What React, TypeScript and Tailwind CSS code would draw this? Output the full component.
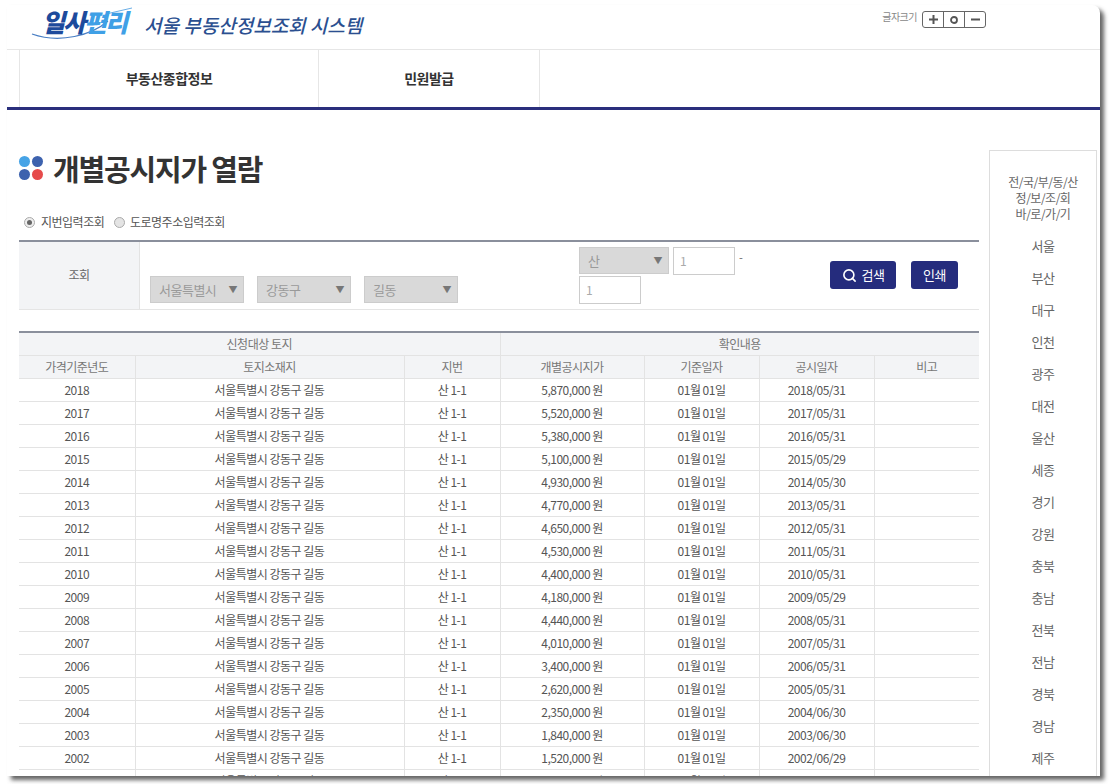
import React from "react";
import { Search } from "lucide-react";

const rows: [string, string, string, string][] = [
  ["2018", "5,870,000 원", "2018/05/31", ""],
  ["2017", "5,520,000 원", "2017/05/31", ""],
  ["2016", "5,380,000 원", "2016/05/31", ""],
  ["2015", "5,100,000 원", "2015/05/29", ""],
  ["2014", "4,930,000 원", "2014/05/30", ""],
  ["2013", "4,770,000 원", "2013/05/31", ""],
  ["2012", "4,650,000 원", "2012/05/31", ""],
  ["2011", "4,530,000 원", "2011/05/31", ""],
  ["2010", "4,400,000 원", "2010/05/31", ""],
  ["2009", "4,180,000 원", "2009/05/29", ""],
  ["2008", "4,440,000 원", "2008/05/31", ""],
  ["2007", "4,010,000 원", "2007/05/31", ""],
  ["2006", "3,400,000 원", "2006/05/31", ""],
  ["2005", "2,620,000 원", "2005/05/31", ""],
  ["2004", "2,350,000 원", "2004/06/30", ""],
  ["2003", "1,840,000 원", "2003/06/30", ""],
  ["2002", "1,520,000 원", "2002/06/29", ""],
  ["2001", "1,330,000 원", "2001/06/30", ""],
];

const regions = ["서울","부산","대구","인천","광주","대전","울산","세종","경기","강원","충북","충남","전북","전남","경북","경남","제주"];

function FakeSelect({ label, w, h = "h-[27px]" }: { label: string; w: string; h?: string }) {
  return (
    <div className={`${w} ${h} flex items-center justify-between bg-[#d9d9d9] border border-[#cccccc] pl-2 pr-[6px] text-[13px] text-[#9a9a9a]`}>
      <span>{label}</span>
      <span className="text-[9px] text-[#777777]">▼</span>
    </div>
  );
}

function FakeInput({ w, h }: { w: string; h: string }) {
  return (
    <div className={`${w} ${h} flex items-center bg-white border border-[#cccccc] pl-[6px] text-[12px] text-[#aaaaaa]`}>1</div>
  );
}

const th = "h-[23px] font-normal text-[12px] text-[#777777] bg-[#f3f4f6] border-b border-r border-[#e3e3e3] last:border-r-0 p-0";
const td = "h-[23px] font-normal text-[12px] text-[#555555] border-b border-r border-[#e3e3e3] last:border-r-0 text-center p-0";

export default function App() {
  return (
    <div
      className="w-[1109px] h-[784px] overflow-hidden bg-white pt-[5px] pl-[7px]"
      style={{ fontFamily: '"Noto Sans CJK KR", "Noto Sans", sans-serif', letterSpacing: "-0.5px" }}
    >
      <div className="w-[1093px] h-[771px] overflow-hidden bg-white rounded-tr-[8px] shadow-[4px_4px_4px_rgba(50,50,50,0.75)]">
        {/* top bar */}
        <header className="h-[45px] flex justify-between border-b border-[#e6e6e6]">
          <div className="flex items-start pl-[25px] relative">
            <svg className="absolute left-[23px] top-0" width="108" height="36" viewBox="0 0 108 36" fill="none">
              <path d="M2 29 C 30 39, 62 30, 78 16" stroke="#4a7fc4" strokeWidth="1.2" />
              <path d="M76 9 L 102 3" stroke="#6aaee6" strokeWidth="1" />
            </svg>
            <div className="relative ml-[10px] mt-[0px] w-[100px] text-[25px] leading-[32px] font-black italic whitespace-nowrap tracking-[-2px]">
              <span className="text-[#1d4a9c]">일사</span>
              <span className="text-[#3fa0e6]">편리</span>
            </div>
            <div className="ml-[2px] mt-[6px] text-[19px] leading-[28px] font-medium italic text-[#2b4f90] whitespace-nowrap tracking-[0px]">
              서울 부동산정보조회 시스템
            </div>
          </div>
          <div className="flex items-start pt-[6px] pr-[114px] gap-[5px]">
            <span className="text-[10px] leading-[12px] text-[#888888]">글자크기</span>
            <div className="flex w-[64px] h-[17px] rounded-[3px] border border-[#666666] text-[#555555]">
              <div className="flex-1 flex items-center justify-center border-r border-[#666666]">
                <svg width="9" height="9" viewBox="0 0 9 9"><path d="M4.5 0v9M0 4.5h9" stroke="#555" strokeWidth="2" /></svg>
              </div>
              <div className="flex-1 flex items-center justify-center border-r border-[#666666]">
                <svg width="8" height="8" viewBox="0 0 8 8"><circle cx="4" cy="4" r="3" fill="none" stroke="#555" strokeWidth="1.8" /></svg>
              </div>
              <div className="flex-1 flex items-center justify-center">
                <svg width="9" height="9" viewBox="0 0 9 9"><path d="M0 4.5h9" stroke="#555" strokeWidth="2" /></svg>
              </div>
            </div>
          </div>
        </header>

        {/* nav */}
        <nav className="h-[60px] flex pl-[12px] border-b-[3px] border-[#2a2f7c]">
          <div className="w-[300px] flex items-center justify-center border-l border-r border-[#e6e6e6] text-[14px] font-bold text-[#333333]">부동산종합정보</div>
          <div className="w-[221px] flex items-center justify-center border-r border-[#e6e6e6] text-[14px] font-bold text-[#333333]">민원발급</div>
        </nav>

        <div className="flex">
          {/* main */}
          <main className="w-[960px] ml-[12px] shrink-0">
            <div className="h-[40px] mt-[38px] flex items-center gap-[10px]">
              <div className="grid grid-cols-2 gap-x-[1px] gap-y-[2px] w-[24px]">
                <span className="w-[11px] h-[11px] rounded-full bg-[#46a3e6]" />
                <span className="w-[11px] h-[11px] rounded-full bg-[#3d62ae]" />
                <span className="w-[11px] h-[11px] rounded-full bg-[#3d62ae]" />
                <span className="w-[11px] h-[11px] rounded-full bg-[#e64b4b]" />
              </div>
              <h1 className="text-[29px] leading-[40px] font-bold text-[#333333] tracking-[-1.2px]">개별공시지가 열람</h1>
            </div>

            <div className="h-[20px] mt-[24px] flex items-center pl-[5px] text-[12px] text-[#555555]">
              <span className="w-[11px] h-[11px] rounded-full border border-[#aaaaaa] bg-[#eeeeee] flex items-center justify-center mr-[6px]">
                <span className="w-[5px] h-[5px] rounded-full bg-[#666666]" />
              </span>
              <span className="w-[73px]">지번입력조회</span>
              <span className="w-[11px] h-[11px] rounded-full border border-[#aaaaaa] bg-[#e4e4e4] mr-[5px]" />
              <span>도로명주소입력조회</span>
            </div>

            {/* search */}
            <div className="mt-[8px] h-[70px] flex border-t-2 border-b border-t-[#8a8f9c] border-b-[#e5e5e5]">
              <div className="w-[121px] bg-[#f3f4f6] border-r border-[#e3e3e3] flex items-center justify-center pb-[2px] text-[12px] text-[#666666]">조회</div>
              <div className="w-[439px] flex items-end gap-[13px] pl-[10px] pb-[6px]">
                <FakeSelect label="서울특별시" w="w-[94px]" />
                <FakeSelect label="강동구" w="w-[94px]" />
                <FakeSelect label="길동" w="w-[94px]" />
              </div>
              <div className="w-[251px] pt-[5px]">
                <div className="flex items-start gap-[4px]">
                  <FakeSelect label="산" w="w-[90px]" />
                  <FakeInput w="w-[62px]" h="h-[28px]" />
                  <span className="text-[11px] leading-[20px] text-[#666666]">-</span>
                </div>
                <div className="mt-[1px]">
                  <FakeInput w="w-[62px]" h="h-[28px]" />
                </div>
              </div>
              <div className="flex items-start gap-[15px] pt-[19px]">
                <button className="w-[66px] h-[28px] rounded-[3px] bg-[#252c7d] text-white text-[13px] flex items-center justify-center gap-[5px]">
                  <Search size={15} strokeWidth={2.6} />
                  <span>검색</span>
                </button>
                <button className="w-[47px] h-[28px] rounded-[3px] bg-[#252c7d] text-white text-[13px] flex items-center justify-center">인쇄</button>
              </div>
            </div>

            {/* table */}
            <table className="mt-[21px] w-[960px] table-fixed border-collapse border-t-2 border-[#8a8f9c] text-center">
              <colgroup>
                <col className="w-[116px]" />
                <col className="w-[269px]" />
                <col className="w-[96px]" />
                <col className="w-[144px]" />
                <col className="w-[115px]" />
                <col className="w-[115px]" />
                <col className="w-[105px]" />
              </colgroup>
              <thead>
                <tr>
                  <th colSpan={3} className={th}>신청대상 토지</th>
                  <th colSpan={4} className={th}>확인내용</th>
                </tr>
                <tr>
                  {["가격기준년도","토지소재지","지번","개별공시지가","기준일자","공시일자","비고"].map((h) => (
                    <th key={h} className={th}>{h}</th>
                  ))}
                </tr>
              </thead>
              <tbody>
                {rows.map((r) => (
                  <tr key={r[0]}>
                    <td className={td}>{r[0]}</td>
                    <td className={td}>서울특별시 강동구 길동</td>
                    <td className={td}>산 1-1</td>
                    <td className={td}>{r[1]}</td>
                    <td className={td}>01월 01일</td>
                    <td className={td}>{r[2]}</td>
                    <td className={td}>{r[3]}</td>
                  </tr>
                ))}
              </tbody>
            </table>
          </main>

          {/* sidebar */}
          <aside className="ml-[10px] mt-[40px] w-[108px] h-[700px] shrink-0 border border-[#dddddd] text-center text-[13px] text-[#666666]">
            <div className="pt-[23px] px-[14px] leading-[16px] text-[12px] break-all">
              전/국/부/동/산
              <br />
              정/보/조/회
              <br />
              바/로/가/기
            </div>
            <ul className="mt-[8px]">
              {regions.map((r) => (
                <li key={r} className="h-[32px] leading-[32px]">{r}</li>
              ))}
            </ul>
          </aside>
        </div>
      </div>
    </div>
  );
}
